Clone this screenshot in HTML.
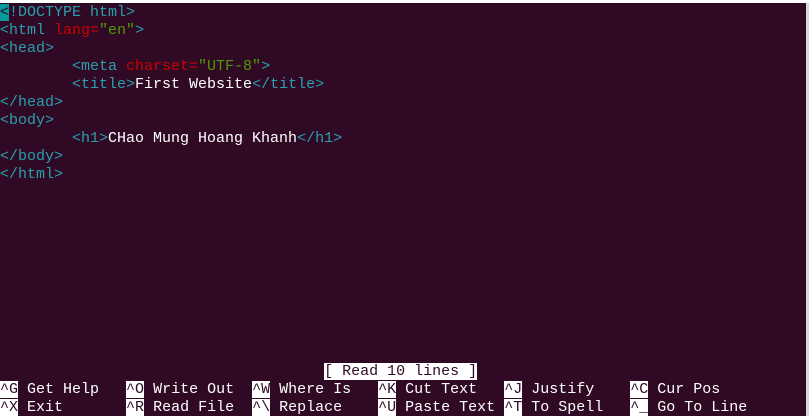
<!DOCTYPE html>
<html><head><meta charset="utf-8"><style>
html,body{margin:0;padding:0;background:#300a24;width:809px;height:416px;overflow:hidden;position:relative}
.top{position:absolute;left:0;top:0;width:809px;height:3px;background:#fff}
.sb{position:absolute;right:0;top:3px;width:3px;height:413px;background:#d8d8d8}
pre{position:absolute;left:0;margin:0;font-family:"Liberation Mono",monospace;font-size:15px;line-height:18px;color:#fff;white-space:pre}
.t{color:#2a9fb0}.r{color:#cc0000}.g{color:#4e9a06}
.cur{background:#06989a;color:#300a24}
.i{background:#fff;color:#300a24}
</style></head><body>
<div class="top"></div>
<pre style="top:4px"><span class="cur">&lt;</span><span class="t">!DOCTYPE html&gt;</span>
<span class="t">&lt;html </span><span class="r">lang=</span><span class="g">"en"</span><span class="t">&gt;</span>
<span class="t">&lt;head&gt;</span>
        <span class="t">&lt;meta </span><span class="r">charset=</span><span class="g">"UTF-8"</span><span class="t">&gt;</span>
        <span class="t">&lt;title&gt;</span>First Website<span class="t">&lt;/title&gt;</span>
<span class="t">&lt;/head&gt;</span>
<span class="t">&lt;body&gt;</span>
        <span class="t">&lt;h1&gt;</span>CHao Mung Hoang Khanh<span class="t">&lt;/h1&gt;</span>
<span class="t">&lt;/body&gt;</span>
<span class="t">&lt;/html&gt;</span></pre>
<pre style="top:363px">                                    <span class="i">[ Read 10 lines ]</span>
<span class="i">^G</span> Get Help   <span class="i">^O</span> Write Out  <span class="i">^W</span> Where Is   <span class="i">^K</span> Cut Text   <span class="i">^J</span> Justify    <span class="i">^C</span> Cur Pos
<span class="i">^X</span> Exit       <span class="i">^R</span> Read File  <span class="i">^\</span> Replace    <span class="i">^U</span> Paste Text <span class="i">^T</span> To Spell   <span class="i">^_</span> Go To Line</pre>
<div class="sb"></div>
</body></html>
